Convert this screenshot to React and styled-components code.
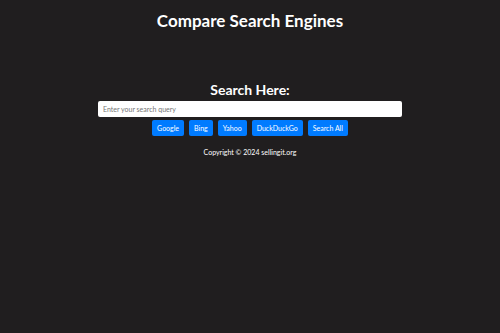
import React, { useState } from 'react';
import styled, { createGlobalStyle } from 'styled-components';

const GlobalStyle = createGlobalStyle`
  body {
    margin: 0;
    background-color: #201e1f;
    font-family: 'Lato', 'Noto Sans', sans-serif;
    color: #ffffff;
  }
`;

const StyledWrapper = styled.div`
  min-height: 333px;
  display: flex;
  flex-direction: column;
  align-items: center;
`;

const StyledTitle = styled.h1`
  margin: 9px 0 0;
  font-size: 17px;
  line-height: 24px;
  font-weight: 700;
`;

const StyledSearch = styled.section`
  margin-top: 48px;
  width: 304px;
  display: flex;
  flex-direction: column;
  align-items: center;
`;

const StyledSubtitle = styled.h2`
  margin: 0 0 2px;
  font-size: 14px;
  line-height: 18px;
  font-weight: 700;
`;

const StyledInput = styled.input`
  box-sizing: border-box;
  width: 100%;
  height: 16px;
  padding: 0 5px;
  border: none;
  border-radius: 2px;
  background: #ffffff;
  font-family: inherit;
  font-size: 7px;
  color: #333;

  ::placeholder {
    color: #6c757d;
  }

  :focus {
    outline: none;
  }
`;

const StyledButtons = styled.div`
  margin-top: 3px;
  display: flex;
  gap: 5px;
`;

const StyledButton = styled.button`
  height: 16px;
  padding: 0 5px;
  border: none;
  border-radius: 2px;
  background-color: #007bff;
  color: #ffffff;
  font-family: inherit;
  font-size: 7px;
  cursor: pointer;
`;

const StyledFooter = styled.p`
  margin: 11px 0 0;
  font-size: 7px;
  line-height: 10px;
`;

const engines = ['Google', 'Bing', 'Yahoo', 'DuckDuckGo', 'Search All'];

const App = () => {
  const [query, setQuery] = useState('');

  return (
    <>
      <GlobalStyle />
      <StyledWrapper>
        <StyledTitle>Compare Search Engines</StyledTitle>
        <StyledSearch>
          <StyledSubtitle>Search Here:</StyledSubtitle>
          <StyledInput
            type="text"
            placeholder="Enter your search query"
            value={query}
            onChange={(e) => setQuery(e.target.value)}
          />
          <StyledButtons>
            {engines.map((name) => (
              <StyledButton key={name}>{name}</StyledButton>
            ))}
          </StyledButtons>
        </StyledSearch>
        <StyledFooter>Copyright © 2024 sellingit.org</StyledFooter>
      </StyledWrapper>
    </>
  );
};

export default App;
